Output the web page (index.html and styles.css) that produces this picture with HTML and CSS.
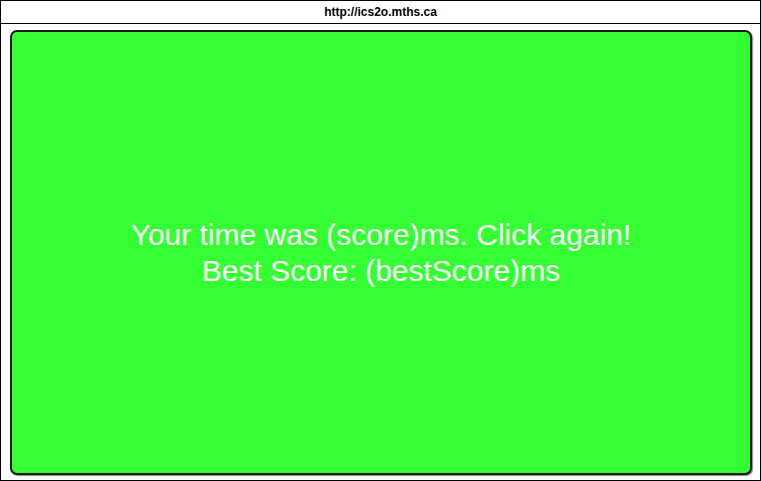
FILE: index.html
```html
<!DOCTYPE html>
<html>
<head>
<meta charset="utf-8">
<link rel="stylesheet" href="styles.css">
</head>
<body>
<div class="frame">
  <div class="urlbar">http://ics2o.mths.ca</div>
  <div class="stage">
    <div class="panel">
      <div class="msg">Your time was (score)ms. Click again!<br>Best Score: (bestScore)ms</div>
    </div>
  </div>
</div>
</body>
</html>
```
FILE: styles.css
```css
html, body {
  margin: 0;
  padding: 0;
  background: #fff;
}
.frame {
  width: 761px;
  height: 481px;
  box-sizing: border-box;
  border: 1px solid #000;
  display: flex;
  flex-direction: column;
  font-family: "Liberation Sans", Arial, sans-serif;
}
.urlbar {
  height: 22px;
  border-bottom: 1px solid #000;
  display: flex;
  align-items: center;
  justify-content: center;
  font-weight: bold;
  font-size: 12px;
  color: #000;
}
.stage {
  flex: 1;
  padding: 6px 8px 5px 9px;
  display: flex;
}
.panel {
  flex: 1;
  box-sizing: border-box;
  background: #33ff33;
  border: 2px solid #1a1a1a;
  border-radius: 7px;
  box-shadow: 1px 1px 1px #888;
  display: flex;
  align-items: center;
  justify-content: center;
}
.msg {
  color: #fff;
  font-size: 30px;
  line-height: 36px;
  text-align: center;
}
```
